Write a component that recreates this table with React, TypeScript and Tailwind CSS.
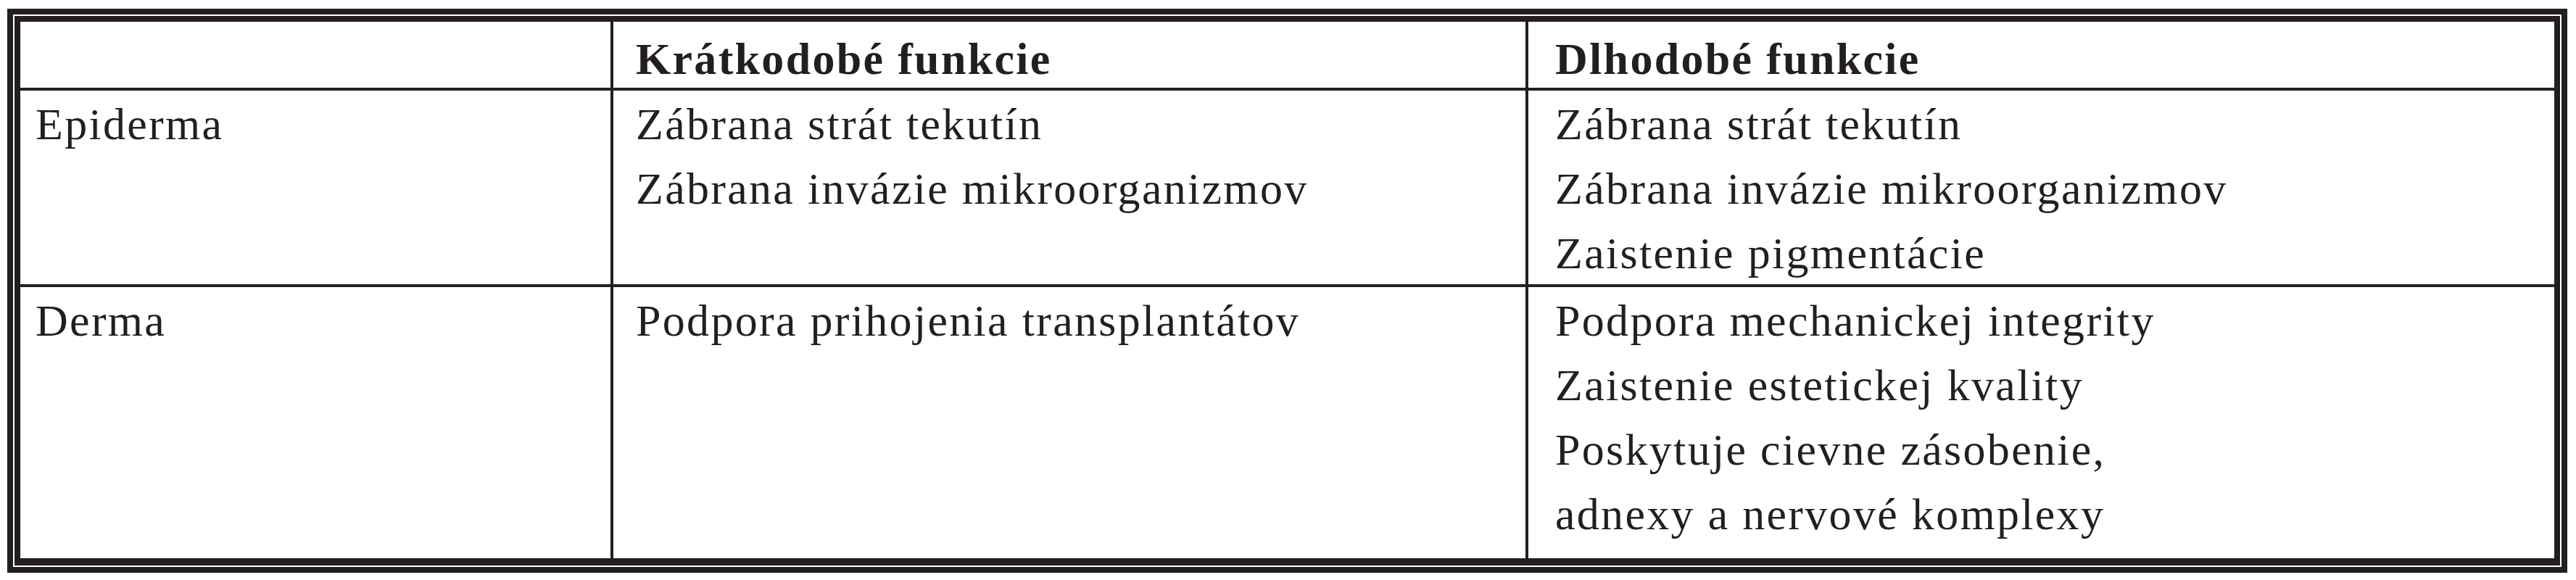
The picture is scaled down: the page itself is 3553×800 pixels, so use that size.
import React from "react";

const font = { fontFamily: '"Liberation Serif", "Times New Roman", serif' };

function Lines({ items }: { items: string[] }) {
  return (
    <>
      {items.map((t, i) => (
        <div key={i} className="whitespace-nowrap">
          {t}
        </div>
      ))}
    </>
  );
}

export default function App() {
  return (
    <div className="w-[3553px] h-[800px] bg-white pt-[12px] pl-[10px]" style={font}>
      <div className="w-[3531px] h-[778px] border-[8px] border-[#231f20] p-[2px] bg-white">
        <div className="w-full h-full border-[8px] border-[#231f20] bg-[#231f20] grid grid-cols-[814px_1258px_1415px] grid-rows-[91px_267px_374px] gap-[4px] text-[62px] leading-[89px] text-[#231f20] tracking-[2.3px]">
          <div className="bg-white"></div>
          <div className="bg-white pl-[31px] pt-[7px] font-bold">Krátkodobé funkcie</div>
          <div className="bg-white pl-[37px] pt-[7px] font-bold">Dlhodobé funkcie</div>

          <div className="bg-white pl-[21px] pt-[2px]">Epiderma</div>
          <div className="bg-white pl-[31px] pt-[2px]">
            <Lines items={["Zábrana strát tekutín", "Zábrana invázie mikroorganizmov"]} />
          </div>
          <div className="bg-white pl-[37px] pt-[2px]">
            <Lines
              items={[
                "Zábrana strát tekutín",
                "Zábrana invázie mikroorganizmov",
                "Zaistenie pigmentácie",
              ]}
            />
          </div>

          <div className="bg-white pl-[21px] pt-[2px]">Derma</div>
          <div className="bg-white pl-[31px] pt-[2px]">
            <Lines items={["Podpora prihojenia transplantátov"]} />
          </div>
          <div className="bg-white pl-[37px] pt-[2px]">
            <Lines
              items={[
                "Podpora mechanickej integrity",
                "Zaistenie estetickej kvality",
                "Poskytuje cievne zásobenie,",
                "adnexy a nervové komplexy",
              ]}
            />
          </div>
        </div>
      </div>
    </div>
  );
}
